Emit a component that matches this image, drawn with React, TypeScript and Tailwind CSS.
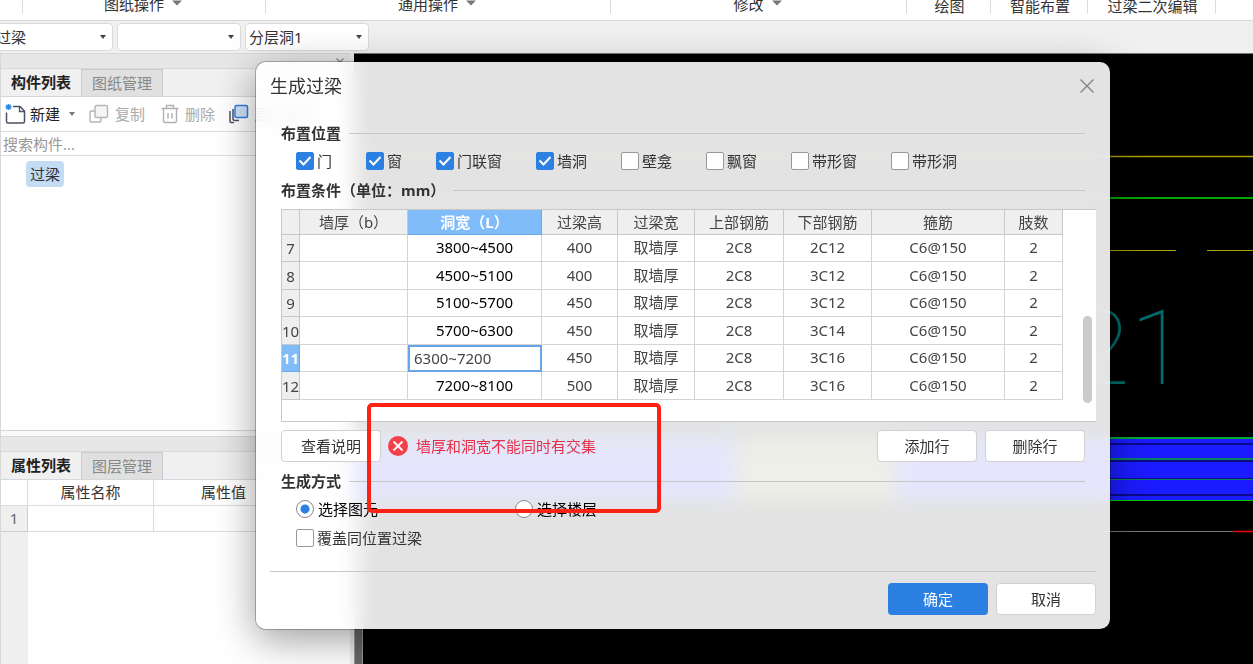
import { useState } from 'react'

type Row = { no: number; span: string; height: string; top: string; bottom: string }

const rows: Row[] = [
  { no: 7, span: '3800~4500', height: '400', top: '2C8', bottom: '2C12' },
  { no: 8, span: '4500~5100', height: '400', top: '2C8', bottom: '3C12' },
  { no: 9, span: '5100~5700', height: '450', top: '2C8', bottom: '3C12' },
  { no: 10, span: '5700~6300', height: '450', top: '2C8', bottom: '3C14' },
  { no: 11, span: '6300~7200', height: '450', top: '2C8', bottom: '3C16' },
  { no: 12, span: '7200~8100', height: '500', top: '2C8', bottom: '3C16' },
]

const positions = ['门', '窗', '门联窗', '墙洞', '壁龛', '飘窗', '带形窗', '带形洞']

const Arrow = ({ className = '' }: { className?: string }) => (
  <svg className={className} width="10" height="6" viewBox="0 0 10 6" fill="currentColor" aria-hidden="true">
    <path d="M0 0.5h10L5 5.5z" />
  </svg>
)

const Ribbon = () => (
  <div className="flex h-5 items-start overflow-hidden bg-white text-[#333]">
    <div className="h-[14px] w-[23px] border-r border-[#dcdcdc]" />
    <button className="flex h-[14px] w-[243px] items-end justify-center gap-2 border-r border-[#dcdcdc] pr-0.5 leading-5">
      图纸操作<Arrow className="mb-2 text-[#777]" />
    </button>
    <button className="flex h-[14px] w-[345px] items-end justify-center gap-2 border-r border-[#dcdcdc] pr-0.5 leading-5">
      通用操作<Arrow className="mb-2 text-[#777]" />
    </button>
    <button className="flex h-[14px] w-[296px] items-end justify-center gap-2 border-r border-[#dcdcdc] pr-0.5 leading-5">
      修改<Arrow className="mb-2 text-[#777]" />
    </button>
    <button className="flex h-[14px] w-[84px] items-end justify-center border-r border-[#dcdcdc] pl-0.5 leading-4">绘图</button>
    <button className="flex h-[14px] w-[97px] items-end justify-center border-r border-[#dcdcdc] pl-0.5 leading-4">智能布置</button>
    <button className="flex h-[14px] w-[128px] items-end justify-center border-r border-[#dcdcdc] pl-0.5 leading-4">过梁二次编辑</button>
  </div>
)

const Combo = ({ label, value, className }: { label: string; value: string; className: string }) => (
  <div className={`relative ${className}`}>
    <select
      aria-label={label}
      defaultValue={value}
      className="h-7 w-full appearance-none rounded border border-[#dadada] bg-white pl-[3px] text-[#333] outline-none"
    >
      <option value={value}>{value}</option>
    </select>
    <svg className="pointer-events-none absolute top-3 right-[7px] text-[#444]" width="6" height="4" fill="currentColor" aria-hidden="true">
      <path d="M0 0h6L3 4z" />
    </svg>
  </div>
)

const Tabs = ({ active, other }: { active: string; other: string }) => (
  <div className="flex h-7 border-b border-[#d4d8dc] bg-[#f0f0f0]">
    <button className="w-20 font-bold text-[#222]">{active}</button>
    <button className="w-[82px] border border-b-0 border-[#c5cbd2] bg-[#e0e0e0] text-[#888]">{other}</button>
  </div>
)

const SidePanel = () => (
  <aside className="flex w-[354px] shrink-0 flex-col border-r-4 border-l border-[#ececec] border-l-[#d8d8d8] bg-white">
    <div className="flex h-4 items-end justify-end border-y border-[#d8d8d8] bg-[#e7e7e7] pr-[6px]">
      <button aria-label="关闭面板" className="text-[#888]">
        <svg className="mb-0.5" width="8" height="8" stroke="currentColor" strokeWidth="1.2" aria-hidden="true">
          <path d="M0.5 0.5l7 7M7.5 0.5l-7 7" />
        </svg>
      </button>
    </div>
    <Tabs active="构件列表" other="图纸管理" />
    <div className="flex h-[35px] shrink-0 items-center overflow-hidden border-b border-[#dcdcdc] whitespace-nowrap">
      <button className="ml-1 flex items-center gap-1 text-[#222]">
        <svg width="21" height="22" viewBox="0 0 21 22" fill="none" aria-hidden="true">
          <path d="M8 3.5h7l4.5 4.5v10.5a1.5 1.5 0 0 1-1.5 1.5h-15a1.5 1.5 0 0 1-1.5-1.5V9.5" stroke="#4b5262" strokeWidth="1.5" />
          <path d="M14.5 3.5v5h5" stroke="#4b5262" strokeWidth="1.3" />
          <path d="M3.5 1v6M0.5 4h6M1.3 1.8l4.4 4.4M5.7 1.8l-4.4 4.4" stroke="#2d86e6" strokeWidth="1.3" />
        </svg>
        新建
        <svg className="ml-[5px] text-[#777]" width="6" height="4" fill="currentColor" aria-hidden="true">
          <path d="M0 0h6L3 4z" />
        </svg>
      </button>
      <button className="ml-[14px] flex items-center gap-[6px] text-[#aaa]">
        <svg width="20" height="20" viewBox="0 0 20 20" fill="none" stroke="#b5b5b5" strokeWidth="1.4" aria-hidden="true">
          <path d="M6 7H2.5A1.5 1.5 0 0 0 1 8.5v8A1.5 1.5 0 0 0 2.5 18h8a1.5 1.5 0 0 0 1.5-1.5V14" />
          <rect x="6" y="1.5" width="12.5" height="12" rx="1.5" fill="#f5f5f5" />
        </svg>
        复制
      </button>
      <button className="ml-4 flex items-center gap-[6px] text-[#aaa]">
        <svg width="18" height="20" viewBox="0 0 18 20" fill="none" stroke="#b0b0b0" strokeWidth="1.4" aria-hidden="true">
          <path d="M0.5 4.5h17M5.5 4V1.5h7V4M2.5 4.5v12.5a1.5 1.5 0 0 0 1.5 1.5h10a1.5 1.5 0 0 0 1.5-1.5V4.5M7 9v5.5M11 9v5.5" />
        </svg>
        删除
      </button>
      <button className="ml-[14px] flex items-center gap-[6px] text-[#222]">
        <svg width="20" height="20" viewBox="0 0 20 20" fill="none" strokeWidth="1.5" aria-hidden="true">
          <path d="M1 7v10.5a1 1 0 0 0 1 1h3M4 5v9.5a2 2 0 0 0 2 2h4" stroke="#4b5262" />
          <rect x="6" y="1.5" width="12.5" height="12" rx="1.5" fill="#cfe2f8" stroke="#2d7fe0" />
        </svg>
        层间复制
      </button>
    </div>
    <input
      aria-label="搜索构件"
      placeholder="搜索构件..."
      className="h-6 w-full border-b border-[#dcdcdc] px-0.5 outline-none placeholder:text-[#999]"
    />
    <div className="h-[275px] border-b border-[#d4d4d4] pt-[5px] pl-[25px]">
      <button className="h-[26px] rounded bg-[#c3dbf3] px-1 text-[#333]">过梁</button>
    </div>
    <div className="h-[5px] bg-[#fafafa]" />
    <div className="h-4 border-y border-[#d8d8d8] bg-[#e7e7e7]" />
    <Tabs active="属性列表" other="图层管理" />
    <div className="flex-1 bg-[linear-gradient(to_right,#efefef_27px,#fff_27px)]">
      <table className="w-full table-fixed border-separate border-spacing-0 text-[#333]">
        <thead>
          <tr className="h-[26px] bg-white">
            <th className="w-[27px] border-r border-b border-[#dcdcdc] p-0" />
            <th className="w-[126px] border-r border-b border-[#dcdcdc] p-0 font-normal">属性名称</th>
            <th className="w-[140px] border-r border-b border-[#dcdcdc] p-0 font-normal">属性值</th>
            <th className="border-b border-[#dcdcdc] p-0" />
          </tr>
        </thead>
        <tbody>
          <tr className="h-[26px] bg-white">
            <th className="border-r border-b border-[#cfcfcf] bg-[#efefef] p-0 font-normal text-[#666]">1</th>
            <td className="border-r border-b border-[#dcdcdc] p-0" />
            <td className="border-r border-b border-[#dcdcdc] p-0" />
            <td className="border-b border-[#dcdcdc] p-0" />
          </tr>
        </tbody>
      </table>
    </div>
  </aside>
)

const Drawing = () => (
  <div className="relative flex-1 overflow-hidden border-t border-[#777] bg-black">
    <svg className="absolute inset-0 h-full w-full" aria-label="绘图区">
      <line x1="0" y1="102.5" x2="100%" y2="102.5" stroke="#aaa000" strokeWidth="1.5" />
      <line x1="0" y1="144" x2="100%" y2="144" stroke="#00a400" strokeWidth="2" />
      <line x1="0" y1="196.5" x2="822" y2="196.5" stroke="#aaa000" />
      <line x1="853" y1="196.5" x2="100%" y2="196.5" stroke="#aaa000" />
      {/* axis number */}
      <text x="719" y="330" fontSize="104" fill="#006c6c" className="font-[Roboto] font-thin">21</text>
      <rect x="0" y="384" width="100%" height="63" fill="#1b1bff" />
      <rect x="381" y="384" width="160" height="63" fill="#74741c" />
      <rect x="0" y="389" width="100%" height="2" fill="#0a0a8a" />
      <rect x="0" y="406" width="100%" height="2" fill="#0a0a8a" />
      <rect x="0" y="404" width="100%" height="2" fill="#0b8062" />
      <rect x="0" y="424" width="100%" height="1" fill="#0a0a8a" />
      <rect x="0" y="425" width="100%" height="1" fill="#0b8062" />
      <rect x="0" y="440" width="100%" height="2" fill="#0a0a8a" />
      <rect x="0" y="383" width="100%" height="2" fill="#00a832" />
      <rect x="0" y="446" width="100%" height="1" fill="#00d400" />
      <line x1="0" y1="477.5" x2="879" y2="477.5" stroke="#777" />
      <line x1="879" y1="477.5" x2="100%" y2="477.5" stroke="#f00000" strokeWidth="1.5" />
    </svg>
    <div className="absolute bottom-0 left-0 h-[150px] w-[9px] border-x border-[#999] bg-[#666]" />
  </div>
)

const SectionTitle = ({ children, className }: { children: string; className: string }) => (
  <div className={`flex items-center gap-2 pr-[11px] ${className}`}>
    <h2 className="font-bold text-[#333]">{children}</h2>
    <div className="h-px flex-1 bg-[#c6c6c6]" />
  </div>
)

const CheckBox = ({ label, checked = false }: { label: string; checked?: boolean }) => (
  <label className="flex items-center gap-[3px] whitespace-nowrap text-[#333]">
    <span className="relative size-[18px]">
      <input
        type="checkbox"
        defaultChecked={checked}
        className="peer block size-[18px] appearance-none rounded-[2px] border border-[#999] bg-white checked:border-[#2b80e2] checked:bg-[#2b80e2]"
      />
      <svg
        className="pointer-events-none absolute inset-0 hidden peer-checked:block"
        width="18"
        height="18"
        fill="none"
        stroke="white"
        strokeWidth="2"
        aria-hidden="true"
      >
        <path d="M3.5 8.5l4 4 7-7.5" />
      </svg>
    </span>
    {label}
  </label>
)

const Radio = ({ label, checked = false }: { label: string; checked?: boolean }) => (
  <label className="flex items-center gap-1 text-black">
    <input
      type="radio"
      name="mode"
      defaultChecked={checked}
      className="size-[18px] appearance-none rounded-full border border-[#888] bg-white checked:bg-[radial-gradient(circle,#2b80e2_4px,#fff_5px)]"
    />
    {label}
  </label>
)

const head = 'border-r border-b border-[#c8c8c8] bg-[#efefef] p-0 font-normal'
const cell = 'border-r border-b border-[#d4d4d4] p-0 pb-0.5'

const LintelTable = () => {
  const [editing, setEditing] = useState('6300~7200')

  return (
    <div className="relative mt-[6px] h-[213px] overflow-hidden border-y border-l border-[#c8c8c8] bg-white">
      <table className="w-[781px] table-fixed border-separate border-spacing-0 text-center leading-5 text-[#444]">
        <thead>
          <tr className="h-[25px]">
            <th className={`${head} w-[18px]`} />
            <th className={`${head} w-[108px]`}>墙厚（b）</th>
            <th className="w-[134px] border-r border-b border-[#69a9e8] bg-[#80bbfa] p-0 font-bold text-white">洞宽（L）</th>
            <th className={`${head} w-[76px]`}>过梁高</th>
            <th className={`${head} w-[77px]`}>过梁宽</th>
            <th className={`${head} w-[89px]`}>上部钢筋</th>
            <th className={`${head} w-[88px]`}>下部钢筋</th>
            <th className={`${head} w-[133px]`}>箍筋</th>
            <th className={`${head} w-[58px]`}>肢数</th>
          </tr>
        </thead>
        <tbody>
          {rows.map((r) => (
            <tr key={r.no} className="odd:h-[27px] even:h-[28px]">
              {r.no === 11 ? (
                <th className="border-r border-b border-[#69a9e8] bg-[#80bbfa] p-0 font-bold text-white">{r.no}</th>
              ) : (
                <th className={head}>{r.no}</th>
              )}
              <td className={cell} />
              {r.no === 11 ? (
                <td className="p-0">
                  <input
                    aria-label="洞宽"
                    value={editing}
                    onChange={(e) => setEditing(e.target.value)}
                    className="block h-[27px] w-full border-2 border-[#67a5e6] bg-white px-1 pb-0.5 outline-none"
                  />
                </td>
              ) : (
                <td className={`${cell} text-black`}>{r.span}</td>
              )}
              <td className={cell}>{r.height}</td>
              <td className={cell}>取墙厚</td>
              <td className={cell}>{r.top}</td>
              <td className={cell}>{r.bottom}</td>
              <td className={cell}>C6@150</td>
              <td className={cell}>2</td>
            </tr>
          ))}
        </tbody>
      </table>
      <div className="absolute right-1 bottom-[18px] h-[87px] w-[9px] rounded-full bg-[#cbcbcb]" />
    </div>
  )
}

const plainButton = 'h-8 w-[100px] rounded border border-[#d0d0d0] bg-white text-[#333]'

const LintelDialog = () => (
  <div
    role="dialog"
    aria-labelledby="dialog-title"
    className="absolute top-[62px] right-[143px] left-64 min-w-[854px] rounded-[10px] bg-white/89 px-[14px] pb-[14px] shadow-[0_10px_40px_rgba(0,0,0,0.4),0_0_0_1px_rgba(0,0,0,0.25)] backdrop-blur-[10px]"
  >
    <div className="flex h-12 items-center justify-between pr-[2px]">
      <h1 id="dialog-title" className="text-lg text-[#333]">生成过梁</h1>
      <button aria-label="关闭" className="text-[#808080]">
        <svg width="14" height="14" stroke="currentColor" strokeWidth="1.3" aria-hidden="true">
          <path d="M0.5 0.5l13 13M13.5 0.5l-13 13" />
        </svg>
      </button>
    </div>

    <div className="pt-[11px] pl-[11px]">
      <SectionTitle className="h-6">布置位置</SectionTitle>
      <div className="grid h-8 grid-cols-[70px_70px_100px_85px_85px_85px_100px_auto] items-center pl-[15px]">
        {positions.map((p, i) => (
          <CheckBox key={p} label={p} checked={i < 4} />
        ))}
      </div>
      <SectionTitle className="h-[26px]">布置条件（单位：mm）</SectionTitle>
      <LintelTable />

      <div className="mt-2 flex items-center pr-[11px]">
        <button className={plainButton}>查看说明</button>
        <div role="alert" className="ml-[7px] flex flex-1 items-center gap-2 text-[#e5304a]">
          <svg width="20" height="20" aria-hidden="true">
            <circle cx="10" cy="10" r="10" fill="#f44149" />
            <path d="M5.5 5.5l9 9M14.5 5.5l-9 9" stroke="white" strokeWidth="1.8" />
          </svg>
          墙厚和洞宽不能同时有交集
        </div>
        <div className="flex gap-2">
          <button className={plainButton}>添加行</button>
          <button className={plainButton}>删除行</button>
        </div>
      </div>

      <SectionTitle className="mt-[7px] h-6">生成方式</SectionTitle>
      <div className="grid h-8 grid-cols-[219px_auto] items-center pl-[15px]">
        <Radio label="选择图元" checked />
        <Radio label="选择楼层" />
      </div>
      <div className="flex h-[26px] items-center pl-[15px]">
        <CheckBox label="覆盖同位置过梁" />
      </div>
    </div>

    <div className="mt-5 flex justify-end gap-2 border-t border-[#c8c8c8] pt-[11px]">
      <button className="h-8 w-[100px] rounded bg-[#2b80e2] text-white">确定</button>
      <button className={plainButton}>取消</button>
    </div>
  </div>
)

const App = () => {
  return (
    <div className="relative flex min-h-screen flex-col overflow-hidden bg-[#f0f0f0] font-['Noto_Sans','Noto_Sans_CJK_SC',sans-serif] text-[15px]">
      <Ribbon />
      <div className="flex h-[33px] items-center gap-1 border-t border-[#d8d8d8]">
        <Combo label="构件类型" value="过梁" className="-ml-2 w-[121px]" />
        <Combo label="构件名称" value="" className="w-[124px]" />
        <Combo label="分层" value="分层洞1" className="w-[124px]" />
      </div>
      <main className="flex flex-1">
        <SidePanel />
        <Drawing />
      </main>
      <LintelDialog />
      <div className="pointer-events-none absolute top-[403px] left-[367px] h-[110px] w-[294px] rounded-[5px] border-4 border-[#ff2113]" />
    </div>
  )
}

export default App
